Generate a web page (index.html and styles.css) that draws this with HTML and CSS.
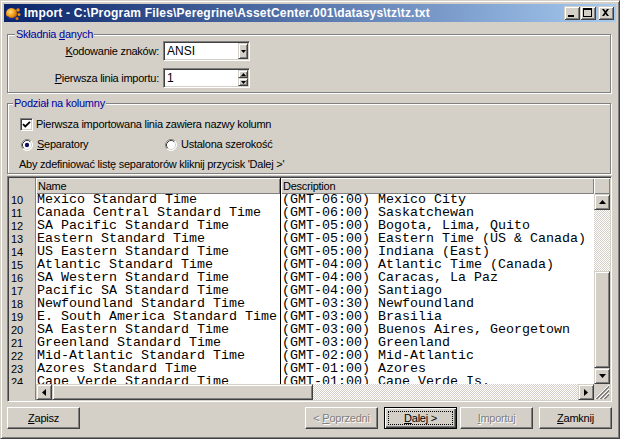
FILE: index.html
```html
<!DOCTYPE html>
<html lang="pl">
<head>
<meta charset="utf-8">
<title>Import</title>
<link rel="stylesheet" href="styles.css">
</head>
<body>
<div class="window">
  <div class="titlebar">
    <svg class="app-icon" width="16" height="16" viewBox="0 0 16 16">
      <defs>
        <radialGradient id="orb" cx="0.4" cy="0.35" r="0.7">
          <stop offset="0" stop-color="#ffe080"/>
          <stop offset="0.55" stop-color="#f29a18"/>
          <stop offset="1" stop-color="#b35a00"/>
        </radialGradient>
      </defs>
      <circle cx="6.5" cy="8.5" r="5.5" fill="url(#orb)"/>
      <path d="M2 11.5 A5.5 5.5 0 0 0 11 12" stroke="#1a2c8a" stroke-width="2" fill="none"/>
      <circle cx="13" cy="5" r="1.8" fill="#f28a10"/>
      <circle cx="14" cy="9.5" r="1.5" fill="#f28a10"/>
      <circle cx="12" cy="13.5" r="1.5" fill="#e07a08"/>
    </svg>
    <span class="title-text">Import - C:\Program Files\Peregrine\AssetCenter.001\datasys\tz\tz.txt</span>
    <div class="caption-btns">
      <span class="cap-btn"><svg width="16" height="14" viewBox="0 0 16 14"><rect x="4" y="9" width="6" height="2"/></svg></span>
      <span class="cap-btn"><svg width="16" height="14" viewBox="0 0 16 14"><path d="M3 2h9v9h-9z M4 4v6h7v-6z" fill-rule="evenodd"/></svg></span>
      <span class="cap-btn cap-close"><svg width="16" height="14" viewBox="0 0 16 14"><path d="M4 3h2l1.5 2 1.5-2h2l-2.5 3.5 2.5 3.5h-2l-1.5-2-1.5 2h-2l2.5-3.5z"/></svg></span>
    </div>
  </div>

  <div class="content">
    <fieldset class="group group-syntax">
      <legend>Składnia <u>d</u>anych</legend>
      <div class="field-row">
        <label class="field-label"><u>K</u>odowanie znaków:</label>
        <div class="field-box">
          <span class="field-value">ANSI</span>
          <span class="mini-btn drop-btn"><svg width="5" height="3" viewBox="0 0 5 3"><path d="M0 0h5l-2.5 3z"/></svg></span>
        </div>
      </div>
      <div class="field-row row-gap">
        <label class="field-label"><u>P</u>ierwsza linia importu:</label>
        <div class="field-box">
          <span class="field-value">1</span>
          <span class="spin-btns">
            <span class="mini-btn spin-btn"><svg width="5" height="3" viewBox="0 0 5 3"><path d="M0 3h5l-2.5-3z"/></svg></span>
            <span class="mini-btn spin-btn"><svg width="5" height="3" viewBox="0 0 5 3"><path d="M0 0h5l-2.5 3z"/></svg></span>
          </span>
        </div>
      </div>
    </fieldset>

    <fieldset class="group group-columns">
      <legend>Podział na kolumny</legend>
      <div class="option-row check-row">
        <span class="checkbox"><svg width="9" height="9" viewBox="0 0 9 9"><path d="M1 4.2 L3.3 6.5 L8 1.8" stroke="#000" stroke-width="1.8" fill="none"/></svg></span>
        <span>Pierwsza importowana linia zawiera nazwy kolumn</span>
      </div>
      <div class="option-row radio-row">
        <span class="radio-item radio-first">
          <svg class="radio" width="12" height="12" viewBox="0 0 12 12">
            <circle cx="6" cy="6" r="5.5" fill="#fff"/>
            <path d="M2.11 9.89 A5.5 5.5 0 0 1 9.89 2.11" stroke="#808080" fill="none"/>
            <path d="M9.89 2.11 A5.5 5.5 0 0 1 2.11 9.89" stroke="#fff" fill="none"/>
            <path d="M2.82 9.18 A4.5 4.5 0 0 1 9.18 2.82" stroke="#404040" fill="none"/>
            <path d="M9.18 2.82 A4.5 4.5 0 0 1 2.82 9.18" stroke="#d4d0c8" fill="none"/>
            <circle cx="6" cy="6" r="2.2" fill="#0c1060"/>
          </svg>
          <span><u>S</u>eparatory</span>
        </span>
        <span class="radio-item">
          <svg class="radio" width="12" height="12" viewBox="0 0 12 12">
            <circle cx="6" cy="6" r="5.5" fill="#fff"/>
            <path d="M2.11 9.89 A5.5 5.5 0 0 1 9.89 2.11" stroke="#808080" fill="none"/>
            <path d="M9.89 2.11 A5.5 5.5 0 0 1 2.11 9.89" stroke="#fff" fill="none"/>
            <path d="M2.82 9.18 A4.5 4.5 0 0 1 9.18 2.82" stroke="#404040" fill="none"/>
            <path d="M9.18 2.82 A4.5 4.5 0 0 1 2.82 9.18" stroke="#d4d0c8" fill="none"/>
          </svg>
          <span>Ustalona szerokość</span>
        </span>
      </div>
      <div class="option-row hint">Aby zdefiniować listę separatorów kliknij przycisk 'Dalej &gt;'</div>
    </fieldset>

    <div class="table">
      <div class="corner"></div>
      <div class="head">
        <div class="hcell hname">Name</div>
        <div class="hcell hdesc">Description</div>
      </div>
      <div class="hcell hfill"></div>

      <div class="rownums">
        <div class="rownum">10</div>
        <div class="rownum">11</div>
        <div class="rownum">12</div>
        <div class="rownum">13</div>
        <div class="rownum">14</div>
        <div class="rownum">15</div>
        <div class="rownum">16</div>
        <div class="rownum">17</div>
        <div class="rownum">18</div>
        <div class="rownum">19</div>
        <div class="rownum">20</div>
        <div class="rownum">21</div>
        <div class="rownum">22</div>
        <div class="rownum">23</div>
        <div class="rownum">24</div>
      </div>
      <div class="rows">
        <div class="row"><span class="cname">Mexico Standard Time</span><span class="cdesc">(GMT-06:00) Mexico City</span></div>
        <div class="row"><span class="cname">Canada Central Standard Time</span><span class="cdesc">(GMT-06:00) Saskatchewan</span></div>
        <div class="row"><span class="cname">SA Pacific Standard Time</span><span class="cdesc">(GMT-05:00) Bogota, Lima, Quito</span></div>
        <div class="row"><span class="cname">Eastern Standard Time</span><span class="cdesc">(GMT-05:00) Eastern Time (US &amp; Canada)</span></div>
        <div class="row"><span class="cname">US Eastern Standard Time</span><span class="cdesc">(GMT-05:00) Indiana (East)</span></div>
        <div class="row"><span class="cname">Atlantic Standard Time</span><span class="cdesc">(GMT-04:00) Atlantic Time (Canada)</span></div>
        <div class="row"><span class="cname">SA Western Standard Time</span><span class="cdesc">(GMT-04:00) Caracas, La Paz</span></div>
        <div class="row"><span class="cname">Pacific SA Standard Time</span><span class="cdesc">(GMT-04:00) Santiago</span></div>
        <div class="row"><span class="cname">Newfoundland Standard Time</span><span class="cdesc">(GMT-03:30) Newfoundland</span></div>
        <div class="row"><span class="cname">E. South America Standard Time</span><span class="cdesc">(GMT-03:00) Brasilia</span></div>
        <div class="row"><span class="cname">SA Eastern Standard Time</span><span class="cdesc">(GMT-03:00) Buenos Aires, Georgetown</span></div>
        <div class="row"><span class="cname">Greenland Standard Time</span><span class="cdesc">(GMT-03:00) Greenland</span></div>
        <div class="row"><span class="cname">Mid-Atlantic Standard Time</span><span class="cdesc">(GMT-02:00) Mid-Atlantic</span></div>
        <div class="row"><span class="cname">Azores Standard Time</span><span class="cdesc">(GMT-01:00) Azores</span></div>
        <div class="row"><span class="cname">Cape Verde Standard Time</span><span class="cdesc">(GMT-01:00) Cape Verde Is.</span></div>
      </div>
      <div class="vscroll">
        <span class="sb-btn"><svg width="7" height="4" viewBox="0 0 7 4"><path d="M0 4h7l-3.5-4z"/></svg></span>
        <span class="sb-track"></span>
        <span class="sb-thumb vthumb"></span>
        <span class="sb-btn"><svg width="7" height="4" viewBox="0 0 7 4"><path d="M0 0h7l-3.5 4z"/></svg></span>
      </div>

      <div class="blank"></div>
      <div class="hscroll">
        <span class="sb-btn"><svg width="4" height="7" viewBox="0 0 4 7"><path d="M4 0v7l-4-3.5z"/></svg></span>
        <span class="sb-thumb hthumb"></span>
        <span class="sb-track"></span>
        <span class="sb-btn"><svg width="4" height="7" viewBox="0 0 4 7"><path d="M0 0v7l4-3.5z"/></svg></span>
      </div>
      <div class="grip">
        <svg width="16" height="16" viewBox="0 0 16 16">
          <path d="M15 1L1 15M15 5L5 15M15 9L9 15" stroke="#fff" fill="none"/>
          <path d="M15 2L2 15M15 3L3 15M15 6L6 15M15 7L7 15M15 10L10 15M15 11L11 15" stroke="#808080" fill="none"/>
        </svg>
      </div>
    </div>

    <div class="buttons">
      <button class="btn"><u>Z</u>apisz</button>
      <div class="btn-group">
        <button class="btn btn-disabled">&lt; <u>P</u>oprzedni</button>
        <button class="btn btn-default gap-wide"><span class="focus-rect"><u>D</u>alej &gt;</span></button>
        <button class="btn btn-disabled gap-narrow"><u>I</u>mportuj</button>
        <button class="btn gap-wide"><u>Z</u>amknij</button>
      </div>
    </div>
  </div>
</div>
</body>
</html>
```

FILE: styles.css
```css
* { box-sizing: border-box; }

html, body {
  margin: 0;
  padding: 0;
}

body {
  width: 620px;
  height: 439px;
  overflow: hidden;
  background: #d4d0c8;
  font-family: "Liberation Sans", Arial, sans-serif;
  font-size: 11px;
  line-height: 13px;
  letter-spacing: -0.25px;
  color: #000;
}

u { text-decoration: underline; text-underline-offset: 1px; }

.window {
  width: 620px;
  height: 439px;
  display: flex;
  flex-direction: column;
  background: #d4d0c8;
  border: 1px solid;
  border-color: #d4d0c8 #404040 #404040 #d4d0c8;
  box-shadow: inset 1px 1px #fff, inset -1px -1px #808080;
  padding: 3px;
}

/* ---------- title bar ---------- */
.titlebar {
  height: 18px;
  flex: none;
  display: flex;
  align-items: center;
  padding-left: 1px;
  padding-right: 2px;
  background: linear-gradient(to right, #0a246a, #a6caf0);
  color: #fff;
}

.app-icon { flex: none; display: block; }

.title-text {
  margin-left: 3px;
  font-weight: bold;
  font-size: 12px;
  letter-spacing: 0.2px;
  white-space: nowrap;
}

.caption-btns {
  margin-left: auto;
  display: flex;
  align-items: center;
}

.cap-btn {
  width: 16px;
  height: 14px;
  background: #d4d0c8;
  box-shadow: inset 1px 1px #d4d0c8, inset -1px -1px #404040, inset 2px 2px #fff, inset -2px -2px #808080;
  display: block;
}
.cap-btn svg { display: block; }
.cap-close { margin-left: 2px; }

/* ---------- content ---------- */
.content {
  flex: 1;
  display: flex;
  flex-direction: column;
  padding: 0 4px 0 3px;
}

.group {
  margin: 0 1px 0 0;
  padding: 0;
  min-width: 0;
  border: 1px solid #808080;
  box-shadow: 1px 1px 0 #fff, inset 1px 1px 0 #fff;
}

.group legend {
  padding: 0 1px;
  color: #0000a0;
  line-height: 13px;
  background: #d4d0c8;
}

.group-syntax { margin-top: 6px; padding-bottom: 4px; }
.group-syntax legend { margin-left: 7px; }

.group-columns { margin-top: 4px; padding: 8px 0 2px; }
.group-columns legend { margin-left: 5px; }

/* field rows */
.field-row {
  display: flex;
  align-items: center;
  height: 20px;
}
.row-gap { margin-top: 7px; }

.field-label {
  width: 151px;
  text-align: right;
  margin-right: 4px;
  white-space: nowrap;
}

.field-box {
  width: 87px;
  height: 20px;
  display: flex;
  align-items: center;
  background: #fff;
  border: 1px solid;
  border-color: #808080 #fff #fff #808080;
  box-shadow: inset 1px 1px #404040, inset -1px -1px #d4d0c8;
  padding: 1px;
}

.field-value {
  flex: 1;
  padding-left: 2px;
  font-size: 12px;
  letter-spacing: 0;
}

.mini-btn {
  display: flex;
  align-items: center;
  justify-content: center;
  width: 10px;
  background: #d4d0c8;
  border: 1px solid;
  border-color: #d4d0c8 #404040 #404040 #d4d0c8;
  box-shadow: inset 1px 1px #fff, inset -1px -1px #808080;
}
.mini-btn svg { display: block; }

.drop-btn { height: 16px; }

.spin-btns {
  display: flex;
  flex-direction: column;
  height: 16px;
}
.spin-btn { height: 8px; }

/* options */
.option-row {
  display: flex;
  align-items: center;
  height: 13px;
  white-space: nowrap;
}
.check-row { padding-left: 12px; }
.radio-row { padding-left: 13px; margin-top: 7px; }
.hint { padding-left: 11px; margin-top: 7px; }

.checkbox {
  width: 13px;
  height: 13px;
  margin-right: 3px;
  background: #fff;
  border: 1px solid;
  border-color: #808080 #fff #fff #808080;
  box-shadow: inset 1px 1px #404040, inset -1px -1px #d4d0c8;
  padding: 1px;
  flex: none;
}
.checkbox svg { display: block; }

.radio-item {
  display: flex;
  align-items: center;
}
.radio-first { width: 144px; }
.radio { display: block; margin-right: 4px; flex: none; }

/* ---------- table ---------- */
.table {
  margin-top: 2px;
  height: 226px;
  border: 1px solid;
  border-color: #808080 #fff #fff #808080;
  box-shadow: inset 1px 1px #404040, inset -1px -1px #d4d0c8;
  padding: 1px;
  display: grid;
  grid-template-columns: 27px 1fr 16px;
  grid-template-rows: 16px 1fr 16px;
  background: #d4d0c8;
}

.corner {
  background: #d4d0c8;
  border-right: 1px solid #808080;
}

.head {
  display: flex;
  min-width: 0;
}

.hcell {
  background: #d4d0c8;
  box-shadow: inset 1px 1px #fff, inset -1px -1px #808080;
  padding: 1px 0 0 2px;
  line-height: 14px;
  white-space: nowrap;
  overflow: hidden;
}
.hname {
  width: 245px;
  flex: none;
  border-right: 1px solid #000;
}
.hdesc { flex: 1; }

.rownums {
  background: #d4d0c8;
  border-right: 1px solid #808080;
  overflow: hidden;
  letter-spacing: 0;
}
.rownum {
  height: 13px;
  line-height: 13px;
  padding-left: 2px;
}
.rownum:first-child { margin-top: 0; }

.rows {
  background: #fff;
  overflow: hidden;
  min-width: 0;
  font-family: "Liberation Mono", "Courier New", monospace;
  font-size: 13.33px;
  letter-spacing: 0;
}
.row {
  display: flex;
  height: 13px;
  line-height: 13px;
  white-space: pre;
}
.row:first-child { margin-top: -1px; }

.cname {
  width: 245px;
  flex: none;
  overflow: hidden;
  padding-left: 1px;
  border-right: 1px solid #000;
}
.cdesc {
  flex: 1;
  overflow: hidden;
  padding-left: 1px;
}

/* scrollbars */
.vscroll {
  display: flex;
  flex-direction: column;
}
.hscroll {
  display: flex;
  min-width: 0;
}

.sb-btn {
  flex: none;
  width: 16px;
  height: 16px;
  display: flex;
  align-items: center;
  justify-content: center;
  background: #d4d0c8;
  border: 1px solid;
  border-color: #d4d0c8 #404040 #404040 #d4d0c8;
  box-shadow: inset 1px 1px #fff, inset -1px -1px #808080;
}
.sb-btn svg { display: block; }

.sb-track {
  flex: 1;
  background: repeating-conic-gradient(#fff 0 25%, #d4d0c8 0 50%) 0 0 / 2px 2px;
}

.sb-thumb {
  flex: none;
  background: #d4d0c8;
  border: 1px solid;
  border-color: #d4d0c8 #404040 #404040 #d4d0c8;
  box-shadow: inset 1px 1px #fff, inset -1px -1px #808080;
}
.vthumb { height: 97px; }
.hthumb { width: 261px; }

.blank {
  background: #d4d0c8;
  border-right: 1px solid #808080;
}

.grip {
  background: #d4d0c8;
}
.grip svg { display: block; }

/* ---------- buttons ---------- */
.buttons {
  margin-top: 5px;
  display: flex;
}

.btn-group {
  margin-left: auto;
  display: flex;
}

.btn {
  width: 73px;
  height: 22px;
  margin: 0;
  padding: 0;
  font-family: inherit;
  font-size: 11px;
  line-height: 13px;
  letter-spacing: -0.25px;
  color: #000;
  background: #d4d0c8;
  border: 1px solid;
  border-color: #fff #404040 #404040 #fff;
  box-shadow: inset -1px -1px #808080;
  border-radius: 0;
}

.btn-disabled {
  color: #808080;
  text-shadow: 1px 1px 0 #fff;
}

.btn-default {
  border-color: #000;
  box-shadow: inset 1px 1px #fff, inset -1px -1px #404040, inset -2px -2px #808080;
  padding: 3px 3px 3px 3px;
  display: flex;
}

.focus-rect {
  flex: 1;
  display: flex;
  align-items: center;
  justify-content: center;
  border: 1px dotted #000;
}

.gap-wide { margin-left: 6px; }
.gap-narrow { margin-left: 3px; }
```
